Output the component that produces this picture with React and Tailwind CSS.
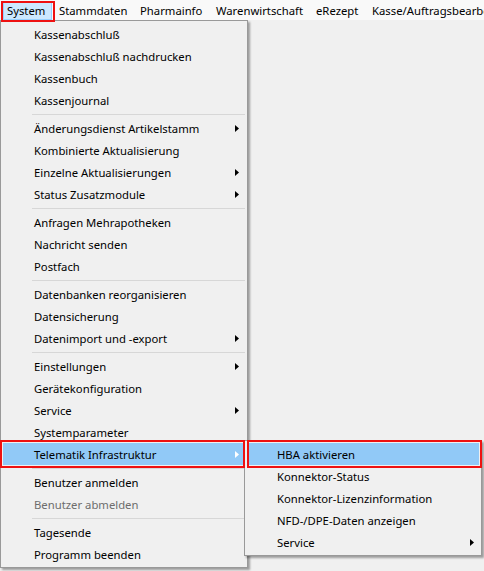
import React from "react";

const Arrow = ({ white }) => (
  <svg width="4" height="7" viewBox="0 0 4 7" className="block">
    <path d="M0 0L4 3.5L0 7Z" fill={white ? "#ffffff" : "#000000"} />
  </svg>
);

const mainItems = [
  { t: "Kassenabschluß" },
  { t: "Kassenabschluß nachdrucken" },
  { t: "Kassenbuch" },
  { t: "Kassenjournal" },
  { sep: true },
  { t: "Änderungsdienst Artikelstamm", sub: true },
  { t: "Kombinierte Aktualisierung" },
  { t: "Einzelne Aktualisierungen", sub: true },
  { t: "Status Zusatzmodule", sub: true },
  { sep: true },
  { t: "Anfragen Mehrapotheken" },
  { t: "Nachricht senden" },
  { t: "Postfach" },
  { sep: true },
  { t: "Datenbanken reorganisieren" },
  { t: "Datensicherung" },
  { t: "Datenimport und -export", sub: true },
  { sep: true },
  { t: "Einstellungen", sub: true },
  { t: "Gerätekonfiguration" },
  { t: "Service", sub: true },
  { t: "Systemparameter" },
  { t: "Telematik Infrastruktur", sub: true, active: true },
  { sep: true },
  { t: "Benutzer anmelden" },
  { t: "Benutzer abmelden", disabled: true },
  { sep: true },
  { t: "Tagesende" },
  { t: "Programm beenden" },
];

const subItems = [
  { t: "HBA aktivieren", active: true },
  { t: "Konnektor-Status" },
  { t: "Konnektor-Lizenzinformation" },
  { t: "NFD-/DPE-Daten anzeigen" },
  { t: "Service", sub: true },
];

const menubar = [
  { t: "System", w: "w-[53px]", active: true },
  { t: "Stammdaten", w: "w-[81px]" },
  { t: "Pharmainfo", w: "w-[76px]" },
  { t: "Warenwirtschaft", w: "w-[100px]" },
  { t: "eRezept", w: "w-[56px]" },
  { t: "Kasse/Auftragsbearbeitung", w: "w-[160px]" },
];

export default function App() {
  return (
    <div
      className="relative w-[484px] h-[571px] overflow-hidden bg-[#f0f0f0] text-black text-[11.3px] leading-none"
      style={{ fontFamily: '"Noto Sans", "Open Sans", sans-serif' }}
    >
      {/* Menubar */}
      <div className="flex h-[20px] bg-[#f9f9f9] whitespace-nowrap">
        {menubar.map((m) => (
          <div
            key={m.t}
            className={`${m.w} shrink-0 flex items-center pl-[6px] pt-[2px] h-full`}
          >
            {m.active ? (
              <span className="-ml-[3px] pl-[3px] pr-[6px] h-[18px] flex items-center bg-[#cce8ff] border border-[#99d1ff]">
                {m.t}
              </span>
            ) : (
              m.t
            )}
          </div>
        ))}
      </div>

      {/* Main dropdown */}
      <div className="absolute left-0 top-[20px] w-[248px] border border-[#999999] bg-[#f0f0f0] p-[2px] shadow-[2px_2px_2px_rgba(0,0,0,0.35)]">
        {mainItems.map((it, i) =>
          it.sep ? (
            <div key={i} className="h-[6px] flex items-center pl-[29px]">
              <div className="h-px w-full bg-[#d7d7d7]" />
            </div>
          ) : (
            <div
              key={i}
              className={`h-[22px] flex items-center justify-between pl-[31px] pr-[6px] whitespace-nowrap ${
                it.active ? "bg-[#91c9f7]" : ""
              } ${it.disabled ? "text-[#6d6d6d]" : ""}`}
            >
              <span className="pt-[2px]">{it.t}</span>
              {it.sub && <Arrow white={it.active} />}
            </div>
          )
        )}
      </div>

      {/* Submenu */}
      <div className="absolute left-[244px] top-[440px] w-[238px] border border-[#999999] bg-[#f0f0f0] p-[2px] shadow-[2px_2px_2px_rgba(0,0,0,0.35)]">
        {subItems.map((it, i) => (
          <div
            key={i}
            className={`h-[22px] flex items-center justify-between pl-[30px] pr-[5px] whitespace-nowrap ${
              it.active ? "bg-[#91c9f7]" : ""
            }`}
          >
            <span className="pt-[2px]">{it.t}</span>
            {it.sub && <Arrow />}
          </div>
        ))}
      </div>

      {/* Red annotation boxes */}
      <div className="absolute left-[1px] top-[1px] w-[54px] h-[21px] border-2 border-[#ee1111]" />
      <div className="absolute left-0 top-[440px] w-[245px] h-[28px] border-2 border-[#ee1111]" />
      <div className="absolute left-[247px] top-[440px] w-[235px] h-[28px] border-2 border-[#ee1111]" />
    </div>
  );
}
